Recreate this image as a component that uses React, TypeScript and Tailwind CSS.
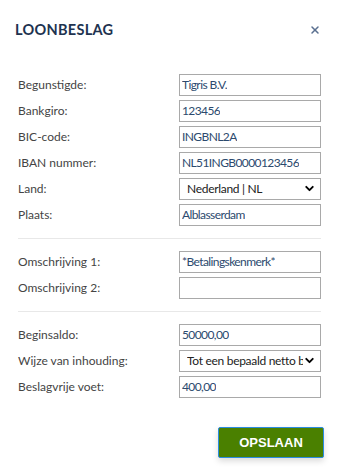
import { ChevronDown, X } from 'lucide-react'

type Row = { label: string; value?: string; select?: boolean }

const GROUPS: Row[][] = [
  [
    { label: 'Begunstigde:', value: 'Tigris B.V.' },
    { label: 'Bankgiro:', value: '123456' },
    { label: 'BIC-code:', value: 'INGBNL2A' },
    { label: 'IBAN nummer:', value: 'NL51INGB0000123456' },
    { label: 'Land:', value: 'Nederland | NL', select: true },
    { label: 'Plaats:', value: 'Alblasserdam' },
  ],
  [
    { label: 'Omschrijving 1:', value: '*Betalingskenmerk*' },
    { label: 'Omschrijving 2:', value: '' },
  ],
  [
    { label: 'Beginsaldo:', value: '50000,00' },
    { label: 'Wijze van inhouding:', value: 'Tot een bepaald netto bedrag', select: true },
    { label: 'Beslagvrije voet:', value: '400,00' },
  ],
]

function Field({ row }: { row: Row }) {
  return (
    <div className="flex h-[22px] items-center">
      <span className="w-[161px] text-[12px] text-[#444]">{row.label}</span>
      {row.select ? (
        <div className="flex h-[22px] w-[142px] items-center border border-[#a9a9a9] bg-white pl-[7px] pr-[4px]">
          <span className="flex-1 overflow-hidden whitespace-nowrap text-[12px] tracking-[-0.3px] text-[#222]">{row.value}</span>
          <ChevronDown className="h-[13px] w-[13px] shrink-0 text-black" strokeWidth={3.5} />
        </div>
      ) : (
        <div className="flex h-[22px] w-[142px] items-center border border-[#a9a9a9] bg-white px-[2px]">
          <span className="overflow-hidden whitespace-nowrap text-[12px] tracking-[-0.6px] text-[#2c4a6e]">{row.value}</span>
        </div>
      )}
    </div>
  )
}

export default function App() {
  return (
    <div className="h-[473px] w-[348px] bg-white font-['Lato',sans-serif]">
      <div className="flex items-center justify-between pl-[15px] pr-[27px] pt-[19px]">
        <h1 className="text-[14.5px] font-bold tracking-[0.02em] text-[#1e3350]">LOONBESLAG</h1>
        <X className="h-[12px] w-[12px] text-[#5a7090]" strokeWidth={3} />
      </div>

      <div className="mt-[33px] px-[18px] w-[339px]">
        {GROUPS.map((group, gi) => (
          <div key={gi}>
            {gi > 0 && <div className="my-[12px] border-t border-[#e8e8e8]" />}
            <div className="flex flex-col gap-[4px]">
              {group.map((row) => (
                <Field key={row.label} row={row} />
              ))}
            </div>
          </div>
        ))}
      </div>

      <div className="mt-[29px] flex justify-end pr-[24px]">
        <button className="h-[31px] w-[106px] rounded-[2px] border border-[#2a8ce0] bg-[#4a8000] font-['Liberation_Sans',sans-serif] text-[13px] font-bold text-white shadow-[0_3px_6px_rgba(0,0,0,0.15)]">
          OPSLAAN
        </button>
      </div>
    </div>
  )
}
